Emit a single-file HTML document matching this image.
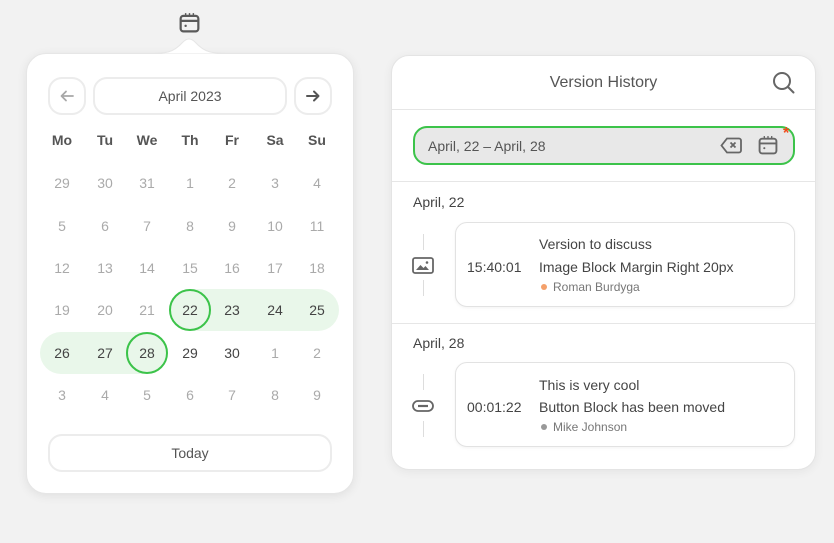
<!DOCTYPE html>
<html><head><style>
*{box-sizing:border-box;margin:0;padding:0}
body{width:834px;height:543px;background:#f2f2f2;font-family:"Liberation Sans",sans-serif;position:relative;overflow:hidden;color:#444}
.abs{position:absolute}
.cal{left:26px;top:53px;width:328px;height:441px;background:#fff;border-radius:20px;box-shadow:0 2px 10px rgba(0,0,0,.08);border:1px solid #e6e6e6}
.btn{background:#fff;border:2px solid #ececec;border-radius:14px;display:flex;align-items:center;justify-content:center;font-size:14px;color:#555}
.cell{position:absolute;width:42px;height:42px;display:flex;align-items:center;justify-content:center;font-size:14px;transform:translate(-50%,-50%)}
.hd{font-weight:bold;color:#555;font-size:14px}
.g{color:#aaa}.d{color:#444}
.ring{border:2px solid #3cc34a;border-radius:50%}
.vh{left:391px;top:55px;width:425px;height:415px;background:#fff;border-radius:18px;border:1px solid #e4e4e4;box-shadow:0 2px 10px rgba(0,0,0,.06)}
.card{left:455px;width:340px;height:85px;border:1px solid #e2e2e2;border-radius:12px;background:#fff;box-shadow:0 1px 3px rgba(0,0,0,.05)}
.t{font-size:14px;color:#444}
.line{width:1px;background:#ddd}
</style></head><body>
<svg class="abs" style="left:179px;top:12px" width="21" height="21" viewBox="0 0 19 19" fill="none" stroke="#5a5a5a" stroke-width="2"><rect x="1.5" y="3.5" width="16" height="14" rx="2.5"/><line x1="1.5" y1="8" x2="17.5" y2="8"/><line x1="6" y1="1" x2="6" y2="4" stroke-width="1.3"/><line x1="9.5" y1="1" x2="9.5" y2="4" stroke-width="1.3"/><line x1="13" y1="1" x2="13" y2="4" stroke-width="1.3"/><circle cx="6" cy="12.5" r="1.1" fill="#5a5a5a" stroke="none"/></svg>
<div class="abs cal"></div>
<svg class="abs" style="left:145px;top:36px" width="90" height="20" viewBox="0 0 90 20"><path d="M0 17.5 C22 17.5 28 17 38 6 Q44 0 50 6 C60 17 66 17.5 90 17.5" fill="#fff" stroke="#e6e6e6"/><rect x="0" y="18" width="90" height="2" fill="#fff"/></svg>
<div class="abs btn" style="left:48px;top:77px;width:38px;height:38px"><svg width="14" height="12" viewBox="0 0 14 12" fill="none" stroke="#a8a8a8" stroke-width="1.8" stroke-linecap="round" stroke-linejoin="round"><path d="M13 6H1.5M6 1.5L1.5 6L6 10.5"/></svg></div>
<div class="abs btn" style="left:93px;top:77px;width:194px;height:38px">April 2023</div>
<div class="abs btn" style="left:294px;top:77px;width:38px;height:38px"><svg width="14" height="12" viewBox="0 0 14 12" fill="none" stroke="#555" stroke-width="2" stroke-linecap="round" stroke-linejoin="round"><path d="M1 6H12.5M8 1.5L12.5 6L8 10.5"/></svg></div>
<div class="abs" style="left:169px;top:289px;width:170px;height:42px;background:#e9f7ea;border-radius:21px"></div>
<div class="abs" style="left:40px;top:332px;width:128px;height:42px;background:#e9f7ea;border-radius:21px"></div>
<div class="abs btn" style="left:48px;top:434px;width:284px;height:38px">Today</div>

<div class="abs vh"></div>
<div class="abs" style="left:391px;top:74px;width:425px;text-align:center;font-size:16px;color:#555">Version History</div>
<svg class="abs" style="left:772px;top:71px" width="23" height="23" viewBox="0 0 23 23" fill="none" stroke="#666" stroke-width="2"><circle cx="10" cy="10" r="8"/><line x1="16" y1="16" x2="21.5" y2="21.5" stroke-linecap="round"/></svg>
<div class="abs" style="left:392px;top:109px;width:423px;height:1px;background:#e6e6e6"></div>
<div class="abs" style="left:413px;top:126px;width:382px;height:39px;background:#e8e8e8;border:2px solid #3cc34a;border-radius:14px"></div>
<div class="abs t" style="left:428px;top:138px;color:#555">April, 22 – April, 28</div>
<svg class="abs" style="left:720px;top:137px" width="22" height="17" viewBox="0 0 22 17" fill="none" stroke="#666" stroke-width="1.8"><path d="M7 1.5 H19 a2 2 0 0 1 2 2 V13.5 a2 2 0 0 1 -2 2 H7 L1.5 8.5 Z"/><path d="M10.5 5.5 L15.5 10.5 M15.5 5.5 L10.5 10.5"/></svg>
<svg class="abs" style="left:758px;top:135px" width="20" height="20" viewBox="0 0 19 19" fill="none" stroke="#666" stroke-width="1.8"><rect x="1.5" y="3.5" width="16" height="14" rx="2.5"/><line x1="1.5" y1="8" x2="17.5" y2="8"/><line x1="6" y1="1" x2="6" y2="4" stroke-width="1.3"/><line x1="9.5" y1="1" x2="9.5" y2="4" stroke-width="1.3"/><line x1="13" y1="1" x2="13" y2="4" stroke-width="1.3"/><circle cx="6" cy="12.5" r="1" fill="#666" stroke="none"/></svg>
<div class="abs" style="left:783px;top:125px;color:#f04a1a;font-size:16px;font-weight:bold">*</div>
<div class="abs" style="left:392px;top:181px;width:423px;height:1px;background:#e6e6e6"></div>
<div class="abs t" style="left:413px;top:194px">April, 22</div>
<div class="abs line" style="left:423px;top:234px;height:16px"></div>
<div class="abs line" style="left:423px;top:280px;height:16px"></div>
<svg class="abs" style="left:412px;top:257px" width="22" height="17" viewBox="0 0 22 17" fill="none" stroke="#666" stroke-width="1.8"><rect x="1" y="1" width="20" height="15" rx="2"/><path d="M4 13 L8.5 8 L11.5 11 L13.5 9 L17 13 Z" fill="#666" stroke="none"/><circle cx="15" cy="5.5" r="1.3" fill="#666" stroke="none"/></svg>
<div class="abs card" style="top:222px"></div>
<div class="abs t" style="left:539px;top:236px">Version to discuss</div>
<div class="abs t" style="left:467px;top:259px">15:40:01</div>
<div class="abs t" style="left:539px;top:259px">Image Block Margin Right 20px</div>
<div class="abs" style="left:541px;top:284px;width:6px;height:6px;border-radius:50%;background:#f4a06a"></div>
<div class="abs" style="left:553px;top:280px;font-size:12px;color:#777">Roman Burdyga</div>
<div class="abs" style="left:392px;top:323px;width:423px;height:1px;background:#e6e6e6"></div>
<div class="abs t" style="left:413px;top:335px">April, 28</div>
<div class="abs line" style="left:423px;top:374px;height:16px"></div>
<div class="abs line" style="left:423px;top:421px;height:16px"></div>
<svg class="abs" style="left:412px;top:400px" width="22" height="12" viewBox="0 0 22 12" fill="none" stroke="#666" stroke-width="1.8"><rect x="1" y="1" width="20" height="10" rx="5"/><line x1="6" y1="6" x2="16" y2="6" stroke-width="2.2"/></svg>
<div class="abs card" style="top:362px"></div>
<div class="abs t" style="left:539px;top:377px">This is very cool</div>
<div class="abs t" style="left:467px;top:399px">00:01:22</div>
<div class="abs t" style="left:539px;top:399px">Button Block has been moved</div>
<div class="abs" style="left:541px;top:424px;width:6px;height:6px;border-radius:50%;background:#999"></div>
<div class="abs" style="left:553px;top:420px;font-size:12px;color:#777">Mike Johnson</div>

<div class="cell hd" style="left:62px;top:140px">Mo</div>
<div class="cell hd" style="left:105px;top:140px">Tu</div>
<div class="cell hd" style="left:147px;top:140px">We</div>
<div class="cell hd" style="left:190px;top:140px">Th</div>
<div class="cell hd" style="left:232px;top:140px">Fr</div>
<div class="cell hd" style="left:275px;top:140px">Sa</div>
<div class="cell hd" style="left:317px;top:140px">Su</div>

<div class="cell g" style="left:62px;top:183px">29</div><div class="cell g" style="left:105px;top:183px">30</div><div class="cell g" style="left:147px;top:183px">31</div><div class="cell g" style="left:190px;top:183px">1</div><div class="cell g" style="left:232px;top:183px">2</div><div class="cell g" style="left:275px;top:183px">3</div><div class="cell g" style="left:317px;top:183px">4</div>
<div class="cell g" style="left:62px;top:226px">5</div><div class="cell g" style="left:105px;top:226px">6</div><div class="cell g" style="left:147px;top:226px">7</div><div class="cell g" style="left:190px;top:226px">8</div><div class="cell g" style="left:232px;top:226px">9</div><div class="cell g" style="left:275px;top:226px">10</div><div class="cell g" style="left:317px;top:226px">11</div>
<div class="cell g" style="left:62px;top:268px">12</div><div class="cell g" style="left:105px;top:268px">13</div><div class="cell g" style="left:147px;top:268px">14</div><div class="cell g" style="left:190px;top:268px">15</div><div class="cell g" style="left:232px;top:268px">16</div><div class="cell g" style="left:275px;top:268px">17</div><div class="cell g" style="left:317px;top:268px">18</div>
<div class="cell g" style="left:62px;top:310px">19</div><div class="cell g" style="left:105px;top:310px">20</div><div class="cell g" style="left:147px;top:310px">21</div><div class="cell d ring" style="left:190px;top:310px">22</div><div class="cell d" style="left:232px;top:310px">23</div><div class="cell d" style="left:275px;top:310px">24</div><div class="cell d" style="left:317px;top:310px">25</div>
<div class="cell d" style="left:62px;top:353px">26</div><div class="cell d" style="left:105px;top:353px">27</div><div class="cell d ring" style="left:147px;top:353px">28</div><div class="cell d" style="left:190px;top:353px">29</div><div class="cell d" style="left:232px;top:353px">30</div><div class="cell g" style="left:275px;top:353px">1</div><div class="cell g" style="left:317px;top:353px">2</div>
<div class="cell g" style="left:62px;top:395px">3</div><div class="cell g" style="left:105px;top:395px">4</div><div class="cell g" style="left:147px;top:395px">5</div><div class="cell g" style="left:190px;top:395px">6</div><div class="cell g" style="left:232px;top:395px">7</div><div class="cell g" style="left:275px;top:395px">8</div><div class="cell g" style="left:317px;top:395px">9</div>
</body></html>
